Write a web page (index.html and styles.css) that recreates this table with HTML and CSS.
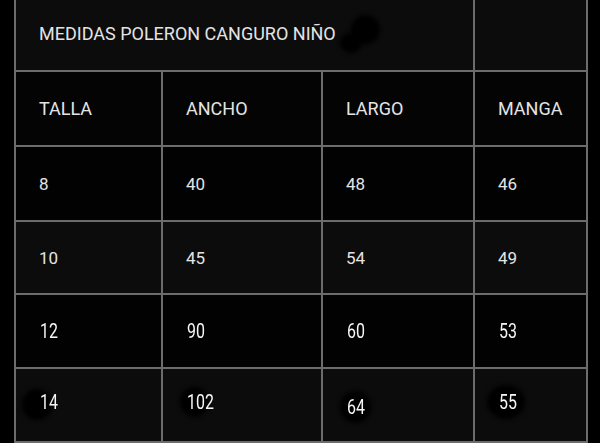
FILE: index.html
```html
<!DOCTYPE html>
<html lang="es">
<head>
<meta charset="utf-8">
<title>Medidas Poleron Canguro Niño</title>
<link rel="stylesheet" href="styles.css">
</head>
<body>
<div class="page">
  <div class="sheet">
    <div class="cell title shade"><span class="txt">MEDIDAS POLERON CANGURO NIÑO</span></div>
    <div class="cell shade"></div>

    <div class="cell head"><span class="txt">TALLA</span></div>
    <div class="cell head"><span class="txt">ANCHO</span></div>
    <div class="cell head"><span class="txt">LARGO</span></div>
    <div class="cell head"><span class="txt">MANGA</span></div>

    <div class="cell dark"><span class="txt">8</span></div>
    <div class="cell dark"><span class="txt">40</span></div>
    <div class="cell dark"><span class="txt">48</span></div>
    <div class="cell dark"><span class="txt">46</span></div>

    <div class="cell shade"><span class="txt">10</span></div>
    <div class="cell shade"><span class="txt">45</span></div>
    <div class="cell shade"><span class="txt">54</span></div>
    <div class="cell shade"><span class="txt">49</span></div>

    <div class="cell dark"><span class="txt narrow">12</span></div>
    <div class="cell dark"><span class="txt narrow">90</span></div>
    <div class="cell dark"><span class="txt narrow">60</span></div>
    <div class="cell dark"><span class="txt narrow">53</span></div>

    <div class="cell shade"><span class="txt narrow low1">14</span></div>
    <div class="cell shade"><span class="txt narrow low1">102</span></div>
    <div class="cell shade"><span class="txt narrow low2">64</span></div>
    <div class="cell shade"><span class="txt narrow low1">55</span></div>
  </div>

  <span class="blob b-title1"></span>
  <span class="blob b-title2"></span>
  <span class="blob b-14"></span>
  <span class="blob b-102"></span>
  <span class="blob b-64"></span>
  <span class="blob b-55"></span>
</div>
</body>
</html>
```

FILE: styles.css
```css
html, body {
  margin: 0;
  padding: 0;
  background: #000;
}

body {
  width: 600px;
  height: 443px;
  overflow: hidden;
  font-family: Roboto, "Noto Sans", "Liberation Sans", sans-serif;
}

.page {
  position: relative;
  width: 600px;
  height: 443px;
}

.sheet {
  margin-left: 14px;
  width: 572px;
  display: grid;
  grid-template-columns: 147px 160px 152px 113px;
  grid-template-rows: 72px 75px 75px 73px 74px 74px;
  border-left: 2px solid #6c6c6c;
  box-sizing: border-box;
}

.cell {
  box-sizing: border-box;
  border-right: 2px solid #6c6c6c;
  border-bottom: 2px solid #6c6c6c;
  display: flex;
  align-items: center;
  padding-left: 23px;
  color: #e4e4e4;
  font-size: 17px;
}

.title {
  grid-column: 1 / 4;
  font-size: 18px;
  padding-bottom: 4px;
}

.head {
  background: #040404;
  font-size: 18px;
}

.dark {
  background: #020202;
}

.shade {
  background: #0c0c0c;
}

.txt {
  position: relative;
  z-index: 2;
}

.narrow {
  display: inline-block;
  font-size: 21px;
  color: #f6f6f6;
  transform: scaleX(0.76);
  transform-origin: left center;
  margin-left: 1px;
}

.low1 {
  top: -3px;
}

.low2 {
  top: 2px;
}

.blob {
  position: absolute;
  z-index: 1;
  border-radius: 50%;
  background: #000;
  filter: blur(2px);
}

.b-title1 { left: 351px; top: 15px; width: 29px; height: 29px; }
.b-title2 { left: 340px; top: 33px; width: 22px; height: 20px; }
.b-14 { left: 22px; top: 389px; width: 30px; height: 31px; }
.b-102 { left: 180px; top: 387px; width: 29px; height: 30px; }
.b-64 { left: 340px; top: 391px; width: 31px; height: 32px; }
.b-55 { left: 487px; top: 385px; width: 38px; height: 34px; }
```
